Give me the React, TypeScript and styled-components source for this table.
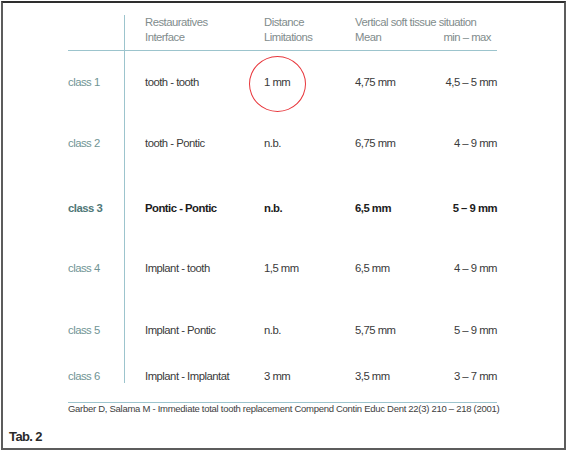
import React from 'react'
import styled, { createGlobalStyle } from 'styled-components'

const GlobalStyle = createGlobalStyle`
    html, body {
        margin: 0;
        padding: 0;
        background: #ffffff;
    }
    body {
        font-family: "Liberation Sans", Arial, sans-serif;
    }
`

interface Row {
    label: string;
    pair: string;
    distance: string;
    mean: string;
    range: string;
    height: number;
    bold?: boolean;
    circled?: boolean;
}

const rows: Row[] = [
    { label: 'class 1', pair: 'tooth - tooth', distance: '1 mm', mean: '4,75 mm', range: '4,5 – 5 mm', height: 61, circled: true },
    { label: 'class 2', pair: 'tooth - Pontic', distance: 'n.b.', mean: '6,75 mm', range: '4 – 9 mm', height: 65 },
    { label: 'class 3', pair: 'Pontic - Pontic', distance: 'n.b.', mean: '6,5 mm', range: '5 – 9 mm', height: 60, bold: true },
    { label: 'class 4', pair: 'Implant - tooth', distance: '1,5 mm', mean: '6,5 mm', range: '4 – 9 mm', height: 62 },
    { label: 'class 5', pair: 'Implant - Pontic', distance: 'n.b.', mean: '5,75 mm', range: '5 – 9 mm', height: 46 },
    { label: 'class 6', pair: 'Implant - Implantat', distance: '3 mm', mean: '3,5 mm', range: '3 – 7 mm', height: 36 },
]

const Frame = styled.div`
    box-sizing: border-box;
    width: 565px;
    height: 449px;
    margin: 1px;
    border: 2px solid #5c5c5c;
    border-top-color: #2e2e2e;
    padding: 12px 0 0 6px;
    overflow: hidden;
`

const Table = styled.div`
    margin-left: 59px;
    width: 429px;
`

const Grid = styled.div<{ $height: number }>`
    display: grid;
    grid-template-columns: 56px 140px 91px 1fr auto;
    height: ${props => props.$height}px;
`

const HeadRow = styled(Grid)`
    border-bottom: 1px solid #9cc4cd;
`

const Cell = styled.div<{ $bold?: boolean }>`
    padding-top: 24px;
    font-size: 11.3px;
    line-height: 14px;
    letter-spacing: -0.5px;
    color: #3a3a3a;
    font-weight: ${props => (props.$bold ? 700 : 400)};
    white-space: nowrap;
    ${props => props.$bold && 'color: #1c1c1c;'}
`

const LabelCell = styled(Cell)`
    color: ${props => (props.$bold ? '#4f7878' : '#6f9494')};
`

const PairCell = styled(Cell)`
    border-left: 1px solid #9cc4cd;
    padding-left: 20px;
`

const RangeCell = styled(Cell)`
    text-align: right;
`

const HeadCell = styled.div`
    font-size: 11.3px;
    line-height: 14.5px;
    letter-spacing: -0.5px;
    color: #7f8c8c;
    white-space: nowrap;
`

const HeadPair = styled(HeadCell)`
    border-left: 1px solid #9cc4cd;
    padding-left: 20px;
`

const HeadSpan = styled(HeadCell)`
    grid-column: 4 / 6;
`

const SubHead = styled.div`
    display: flex;
    justify-content: space-between;
    padding-right: 6px;
`

const Marked = styled.span`
    position: relative;
`

const Circle = styled.span`
    position: absolute;
    left: -15px;
    top: -20px;
    width: 55px;
    height: 54px;
    border: 1px solid #e8373c;
    border-radius: 50%;
`

const Rule = styled.div`
    margin: 21px 0 0 59px;
    width: 429px;
    height: 1px;
    background: #9cc4cd;
`

const Source = styled.div`
    margin-left: 59px;
    font-size: 9.5px;
    line-height: 12px;
    letter-spacing: -0.28px;
    color: #3e3e3e;
    white-space: nowrap;
`

const TabLabel = styled.div`
    margin-top: 14px;
    font-size: 13px;
    line-height: 16px;
    letter-spacing: -0.6px;
    font-weight: 700;
    color: #2a2a2a;
`

function App() {
    return (
        <>
            <GlobalStyle />
            <Frame>
                <Table>
                    <HeadRow $height={35}>
                        <HeadCell />
                        <HeadPair>Restauratives<br />Interface</HeadPair>
                        <HeadCell>Distance<br />Limitations</HeadCell>
                        <HeadSpan>
                            Vertical soft tissue situation
                            <SubHead>
                                <span>Mean</span>
                                <span>min – max</span>
                            </SubHead>
                        </HeadSpan>
                    </HeadRow>
                    {rows.map(row => (
                        <Grid key={row.label} $height={row.height}>
                            <LabelCell $bold={row.bold}>{row.label}</LabelCell>
                            <PairCell $bold={row.bold}>{row.pair}</PairCell>
                            <Cell $bold={row.bold}>
                                {row.circled ? (
                                    <Marked>
                                        {row.distance}
                                        <Circle />
                                    </Marked>
                                ) : row.distance}
                            </Cell>
                            <Cell $bold={row.bold}>{row.mean}</Cell>
                            <RangeCell $bold={row.bold}>{row.range}</RangeCell>
                        </Grid>
                    ))}
                </Table>
                <Rule />
                <Source>
                    Garber D, Salama M - Immediate total tooth replacement Compend Contin Educ Dent 22(3) 210 – 218 (2001)
                </Source>
                <TabLabel>Tab. 2</TabLabel>
            </Frame>
        </>
    )
}

export default App
